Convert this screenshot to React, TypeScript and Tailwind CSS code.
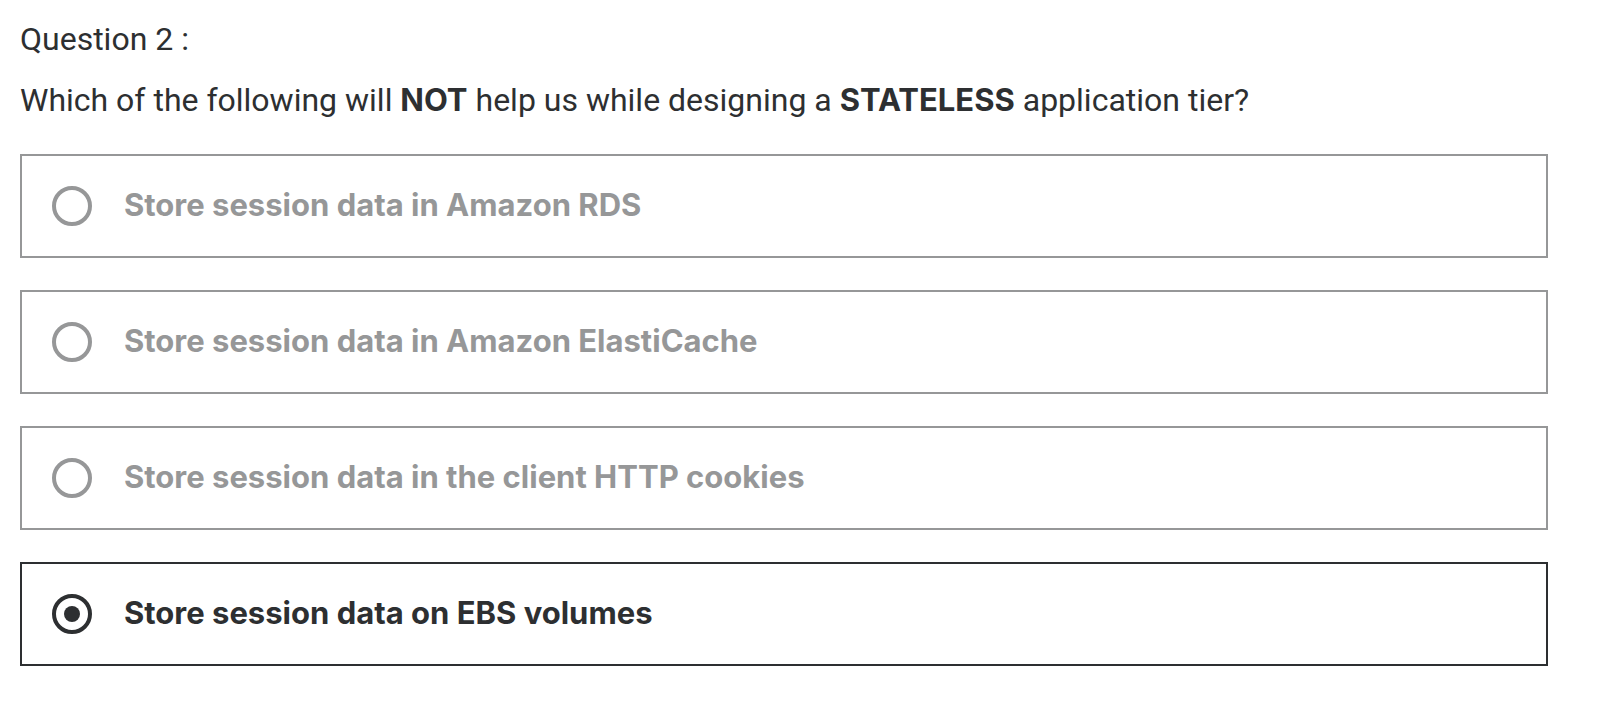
import { useState } from "react";

const answers = [
  "Store session data in Amazon RDS",
  "Store session data in Amazon ElastiCache",
  "Store session data in the client HTTP cookies",
  "Store session data on EBS volumes",
];

const strong = "font-['Inter',sans-serif] text-[31px] leading-none font-bold";

export default function App() {
  const [selected, setSelected] = useState(3);

  return (
    <main className="min-h-screen bg-white pt-[17px] pr-16 pb-10 pl-5 font-['Roboto',sans-serif] text-[32px] leading-[45px] text-[#2d2f31]">
      <h1>Question 2 :</h1>
      <p id="question" className="mt-4">
        Which of the following will <strong className={strong}>NOT</strong> help us while designing a{" "}
        <strong className={strong}>STATELESS</strong> application tier?
      </p>
      <div role="radiogroup" aria-labelledby="question" className="mt-[31px] flex flex-col gap-8">
        {answers.map((answer, i) => (
          <label
            key={answer}
            className="flex min-h-26 cursor-pointer items-center gap-8 border-2 border-[#969798] px-[30px] py-4 text-[#969798] has-checked:border-[#2d2f31] has-checked:text-[#2d2f31]"
          >
            <input
              type="radio"
              name="answer"
              checked={selected === i}
              onChange={() => setSelected(i)}
              className="grid size-10 shrink-0 appearance-none place-items-center rounded-full border-4 border-current before:size-4 before:rounded-full before:bg-current before:opacity-0 checked:before:opacity-100"
            />
            <span className="pb-0.5 font-['Inter',sans-serif] text-[31px] leading-10 font-bold">{answer}</span>
          </label>
        ))}
      </div>
    </main>
  );
}
